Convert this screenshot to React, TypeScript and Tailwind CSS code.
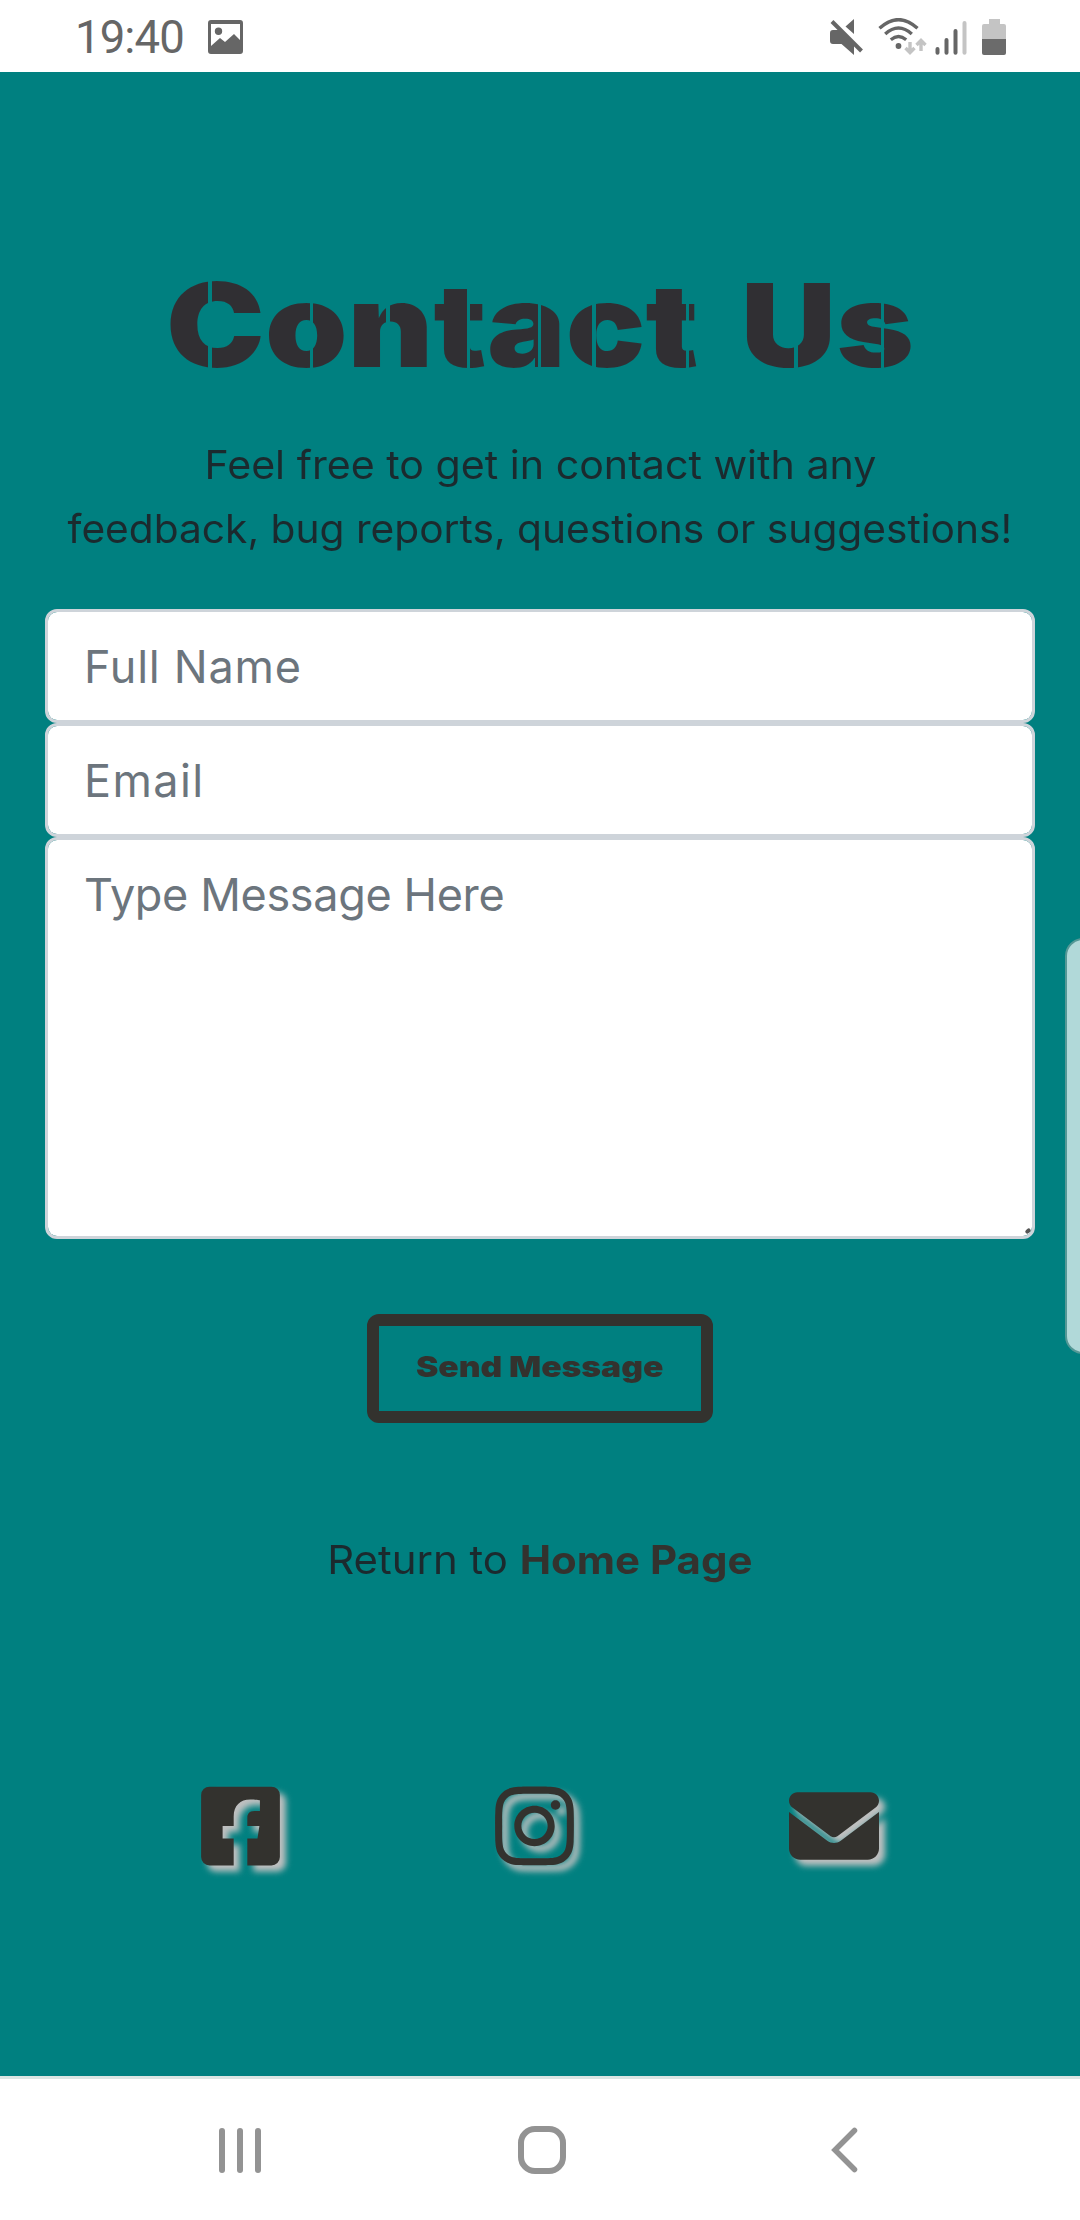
import React from "react";
import { FaFacebookSquare, FaInstagram } from "react-icons/fa";
import { FaEnvelope } from "react-icons/fa6";

function StatusBar() {
  return (
    <header className="flex h-[72px] items-start bg-white text-[#666666]">
      <span className="ml-[75px] mt-[11px] w-[133px] whitespace-nowrap font-[Roboto] text-[45.5px] leading-[54px] tracking-[-0.9px]">
        19:40
      </span>
      <svg className="mt-[20px]" width="35" height="34" viewBox="0 0 35 34">
        <path
          fillRule="evenodd"
          fill="currentColor"
          d="M3 0H32Q35 0 35 3V31Q35 34 32 34H3Q0 34 0 31V3Q0 0 3 0ZM3 4V26L12 18L17 22L26 14L32 20V4ZM10.500 7.500A3.700 3.700 0 1 1 10.500 14.900A3.700 3.700 0 1 1 10.500 7.500Z"
        />
      </svg>
      <div className="ml-auto mr-[73px] mt-[18px] flex">
        <svg width="35" height="38" viewBox="0 0 35 38">
          <path fill="currentColor" d="M3 12H9L24 27V37L11.500 26H3Q0 26 0 23V15Q0 12 3 12ZM24 1V16L15.500 8.500Z" />
          <path stroke="currentColor" strokeWidth="4" d="M2 3.500L31.500 33" />
        </svg>
        <svg className="ml-[13px]" width="49" height="38" viewBox="0 0 49 38">
          <g fill="none" stroke="currentColor" strokeWidth="3.400">
            <path d="M1.500 10.300Q20.500 -7 39.500 10.300" />
            <path d="M7.200 16Q20.500 4 33.800 16" />
            <path d="M12.800 21.700Q20.500 15.500 28.200 21.700" />
          </g>
          <circle cx="20.500" cy="28" r="2.900" fill="currentColor" />
          <g fill="none" stroke="#c4c4c4" strokeWidth="3.400">
            <path d="M32 24V34.500M27.500 30L32 34.500L36.500 30" />
            <path d="M43 33V22.500M38.500 27L43 22.500L47.500 27" />
          </g>
        </svg>
        <svg className="ml-[7px]" width="33" height="38" viewBox="0 0 33 38">
          <g strokeWidth="4" strokeLinecap="round">
            <path stroke="#666666" d="M3.500 31V34.800M12.500 22V34.800M21.500 13V34.800" />
            <path stroke="#c4c4c4" d="M30.500 5V34.800" />
          </g>
        </svg>
        <svg className="ml-[14px]" width="26" height="38" viewBox="0 0 26 38">
          <path fill="#c4c4c4" d="M8 1H19V6H23Q25 6 25 8V22H1V8Q1 6 3 6H8Z" />
          <path fill="#6b6b6b" d="M1 21H25V35Q25 37 23 37H3Q1 37 1 35Z" />
        </svg>
      </div>
    </header>
  );
}

function ContactForm() {
  return (
    <form className="flex w-[990px] flex-col items-center" onSubmit={(e) => e.preventDefault()}>
      <input
        placeholder="Full Name"
        className="h-[114px] w-full rounded-[12px] border-[3px] border-[#ced4da] bg-white bg-clip-padding px-[36px] text-[45px] tracking-[0.75px] placeholder:text-[#6c757d]"
      />
      <input
        placeholder="Email"
        className="h-[114px] w-full rounded-[12px] border-[3px] border-[#ced4da] bg-white bg-clip-padding px-[36px] text-[45px] tracking-[1.4px] placeholder:text-[#6c757d]"
      />
      <div className="relative w-full">
        <textarea
          placeholder="Type Message Here"
          className="block h-[402px] w-full resize-none rounded-[12px] border-[3px] border-[#ced4da] bg-white bg-clip-padding px-[36px] py-[19px] text-[45px] leading-[72px] tracking-[-0.35px] placeholder:text-[#6c757d]"
        />
        <span className="absolute bottom-[6px] right-[4px] h-[4px] w-[6px] -rotate-45 rounded-full bg-[#555555]" />
      </div>
      <button className="mt-[75px] h-[109px] w-[346px] whitespace-nowrap rounded-[12px] border-[12px] border-[#33322e] pb-[4px] text-[29px] font-black text-[#33322e]">
        <span className="inline-block scale-x-[1.16]">Send Message</span>
      </button>
    </form>
  );
}

export default function App() {
  return (
    <div className="relative flex h-[2220px] w-[1080px] flex-col overflow-hidden bg-[#008080] font-[Inter,sans-serif]">
      <StatusBar />
      <main className="flex flex-1 flex-col items-center">
        {/* Narrow transparent stops cut the stencil slits into the lettering. */}
        <h1 className="mt-[178px] scale-x-[1.14] whitespace-nowrap bg-[linear-gradient(90deg,#302f33_37px,transparent_37px_40px,#302f33_40px_126px,transparent_126px_129px,#302f33_129px_193px,transparent_193px_196px,#302f33_196px_264px,transparent_264px_267px,#302f33_267px_326px,transparent_326px_329px,#302f33_329px_374px,transparent_374px_377px,#302f33_377px_456px,transparent_456px_459px,#302f33_459px_551px,transparent_551px_554px,#302f33_554px_627px,transparent_627px_630px,#302f33_630px)] bg-clip-text text-[116px] font-black leading-[150px] text-transparent [word-spacing:14px]">
          Contact Us
        </h1>
        <p className="mt-[33px] flex flex-col items-center whitespace-nowrap text-[39px] leading-[64px] text-[#1b2a2e]">
          <span className="scale-x-[1.055]">Feel free to get in contact with any</span>
          <span className="scale-x-[1.043]">feedback, bug reports, questions or suggestions!</span>
        </p>
        <div className="mt-[48px]">
          <ContactForm />
        </div>
        <p className="mt-[105px] scale-x-[1.075] whitespace-nowrap text-[39px] leading-[64px] text-[#1b2a2e]">
          Return to <a className="font-bold text-[#33322e]">Home Page</a>
        </p>
        <nav className="mt-[189px] flex w-full pl-[201px] text-[90px] text-[#33322e] [&_svg]:drop-shadow-[6px_6px_3px_#c0c0c0]">
          <FaFacebookSquare className="h-[90px] w-[79px]" />
          <FaInstagram className="ml-[215px] h-[90px] w-[79px]" />
          <FaEnvelope className="ml-[215px] h-[90px] w-[90px]" />
        </nav>
      </main>
      <footer className="h-[144px] border-t-[3px] border-[#dbe6e3] bg-white text-[#939393]">
        <div className="flex h-full items-center pl-[219px] pt-px">
          <div className="flex w-[42px] justify-between">
            <span className="h-[45px] w-[6px] rounded-full bg-[#939393]" />
            <span className="h-[45px] w-[6px] rounded-full bg-[#939393]" />
            <span className="h-[45px] w-[6px] rounded-full bg-[#939393]" />
          </div>
          <span className="ml-[257px] h-[48px] w-[48px] rounded-[17px] border-[6px] border-[#939393]" />
          <svg className="ml-[265px]" width="27" height="46" viewBox="0 0 27 46" fill="none">
            <path d="M23.500 3.500L4 23L23.500 42.500" stroke="currentColor" strokeWidth="5.500" strokeLinecap="round" />
          </svg>
        </div>
      </footer>
      <div className="absolute right-[-10px] top-[938px] h-[416px] w-[25px] rounded-l-[18px] border-2 border-[#559896] bg-[#b1d9d9]" />
    </div>
  );
}
